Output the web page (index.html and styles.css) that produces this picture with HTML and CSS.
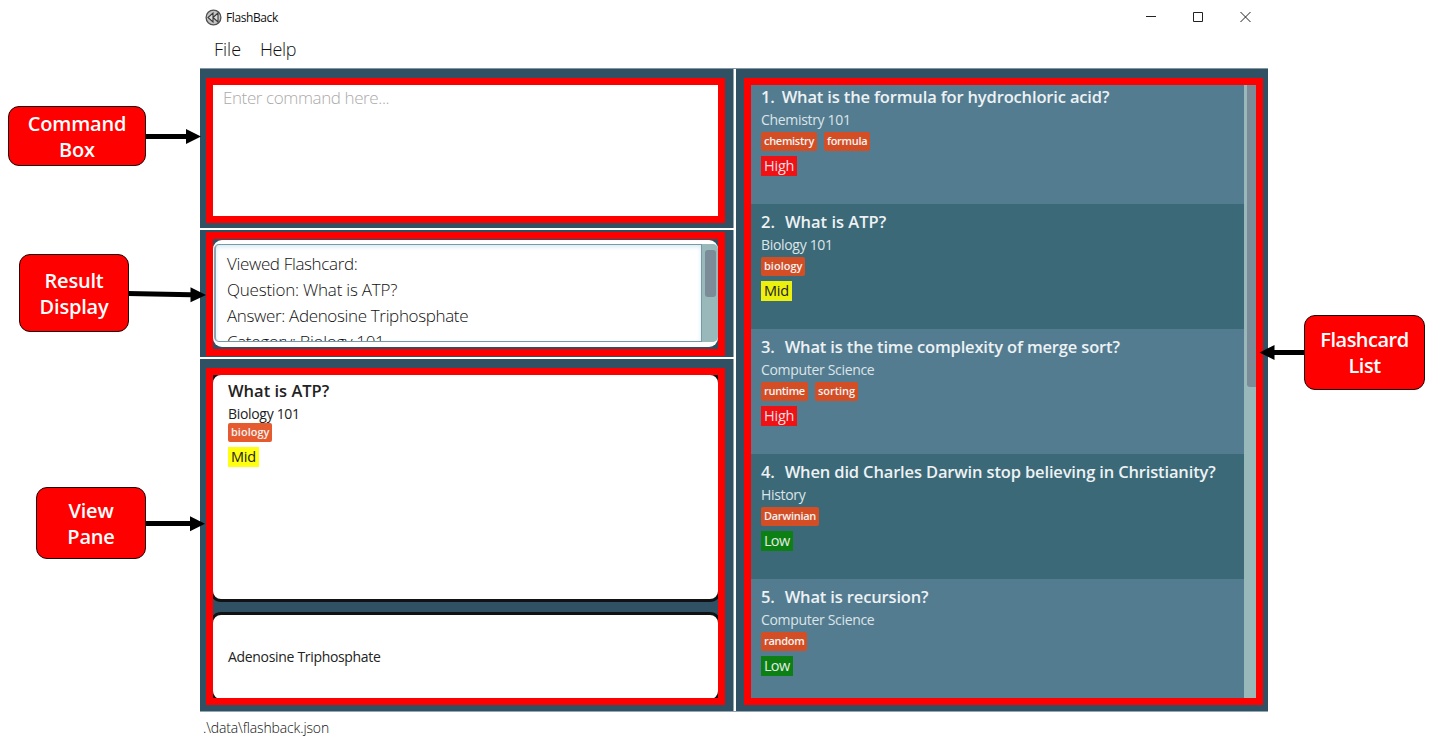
FILE: index.html
```html
<!DOCTYPE html>
<html lang="en">
<head>
<meta charset="utf-8">
<title>FlashBack</title>
<link rel="stylesheet" href="styles.css">
</head>
<body>
<div class="stage">
  <main class="window">
    <header class="titlebar">
      <svg class="logo" width="17" height="17" viewBox="0 0 17 17"><circle cx="8.5" cy="8.5" r="7.4" fill="#c4c4c4" stroke="#505050" stroke-width="1.3"/><path d="M8 4v9L3 8.5zM13 4v9L8 8.500z" fill="#ddd" stroke="#3a3a3a" stroke-width="1.1"/></svg>
      <span class="app-name">FlashBack</span>
      <svg class="controls" width="106" height="12" viewBox="0 0 106 12" fill="none" stroke="#222" stroke-width="1"><path d="M0 5.500h10"/><path d="M47.500 1.500h9v9h-9z"/><path d="M94.500 1l10 10M104.500 1l-10 10"/></svg>
    </header>
    <nav class="menu"><span class="menu-file">File</span><span class="menu-help">Help</span></nav>
    <div class="content">
      <div class="left">
        <section class="pane command"><div class="frame"><span class="prompt">Enter command here...</span></div></section>
        <section class="pane result"><div class="frame">
          <div class="result-box">
            <div class="result-text"><p>Viewed Flashcard:</p><p class="line-question">Question: What is ATP?</p><p>Answer: Adenosine Triphosphate</p><p>Category: Biology 101</p></div>
            <div class="result-bar"><div class="result-thumb"></div></div>
          </div>
        </div></section>
        <section class="pane view"><div class="frame">
          <div class="face question">
            <h2 class="title short">What is ATP?</h2><p class="category">Biology 101</p>
            <div class="tags"><span class="tag wide">biology</span></div><span class="level mid">Mid</span>
          </div>
          <div class="face answer"><p class="category">Adenosine Triphosphate</p></div>
        </div></section>
      </div>
      <section class="pane list"><div class="frame">
        <div class="cards">
          <article class="card"><h2 class="title"><span class="num first">1.</span>What is the formula for hydrochloric acid?</h2><p class="category">Chemistry 101</p><div class="tags"><span class="tag">chemistry</span><span class="tag">formula</span></div><span class="level high">High</span></article>
          <article class="card"><h2 class="title short"><span class="num">2.</span>What is ATP?</h2><p class="category">Biology 101</p><div class="tags"><span class="tag wide">biology</span></div><span class="level mid">Mid</span></article>
          <article class="card"><h2 class="title"><span class="num">3.</span>What is the time complexity of merge sort?</h2><p class="category">Computer Science</p><div class="tags"><span class="tag">runtime</span><span class="tag wide">sorting</span></div><span class="level high">High</span></article>
          <article class="card"><h2 class="title"><span class="num">4.</span>When did Charles Darwin stop believing in Christianity?</h2><p class="category">History</p><div class="tags"><span class="tag">Darwinian</span></div><span class="level low">Low</span></article>
          <article class="card"><h2 class="title"><span class="num">5.</span>What is recursion?</h2><p class="category">Computer Science</p><div class="tags"><span class="tag">random</span></div><span class="level low">Low</span></article>
        </div>
        <div class="list-bar"><div class="list-thumb"></div></div>
      </div></section>
    </div>
    <footer class="status">.\data\flashback.json</footer>
  </main>

  <svg class="arrows" width="1430" height="746" viewBox="0 0 1430 746">
    <g stroke="#000" stroke-width="5"><path d="M145 136.5H187"/><path d="M128 293.5L191 294.8"/><path d="M145 523.5H191"/><path d="M1305 352.5H1273"/></g>
    <path d="M186 129l15 7.5-15 7.5zM190.500 287.300l15.500 7.700-15.500 7.300zM190 516.300l15 7.400-15 7.600zM1274.500 345l-15 7.500 15 7.500z"/>
  </svg>
  <div class="callout callout-command"><span>Command</span><span>Box</span></div>
  <div class="callout callout-result"><span>Result</span><span>Display</span></div>
  <div class="callout callout-view"><span>View</span><span>Pane</span></div>
  <div class="callout callout-list"><span>Flashcard</span><span>List</span></div>
</div>
</body>
</html>
```
FILE: styles.css
```css
* { box-sizing: border-box; }
body, p, h2 { margin: 0; }
body { background: #fff; font-family: "Open Sans", "Noto Sans", sans-serif; overflow: hidden; }
.stage { position: relative; width: 1430px; height: 746px; }
.window { width: 1068px; height: 746px; margin-left: 200px; display: flex; flex-direction: column; white-space: nowrap; }
.titlebar { height: 33px; display: flex; align-items: center; padding: 1px 16px 0 5px; }
.logo { margin-right: 4px; }
.app-name { font-size: 12px; letter-spacing: -0.4px; color: #111; }
.controls { margin-left: auto; }
.menu { height: 35px; display: flex; padding-left: 14px; font-size: 18px; line-height: 33px; font-weight: 300; color: #111; gap: 19px; }
.menu-help { letter-spacing: -0.4px; }
.content { height: 644px; display: grid; grid-template-columns: 534px 532px; gap: 2px; background: #fff; border-top: 1px solid #8297a2; border-bottom: 1px solid #93a6b0; }
.left { display: grid; grid-template-rows: 159px 127px 352px; gap: 2px; }
.pane { background: #2f5163; display: flex; }
.left .pane { border-right: 1px solid #93a6b0; }
.frame { border: 7px solid #f00; width: 519px; }
.command { padding: 9px 0 5px 6px; }
.command .frame { background: #fff; padding-left: 10px; line-height: 26px; }
.prompt { font-size: 17px; font-weight: 300; letter-spacing: -0.4px; color: #aaa; }
.result { padding: 2px 0 1px 6px; }
.result .frame { padding: 1px 0 2px; background: #2f5163; overflow: hidden; }
.result-box { height: 107px; background: #fff; border-radius: 9px; padding: 4px 0 5px 1px; display: flex; }
.result-text { width: 488px; border: 1px solid #7899a8; border-left: 2px solid #8aa6b4; border-radius: 5px 0 0 5px; box-shadow: inset 0 2px 4px #d8eaf2; overflow: hidden; padding: 6px 0 0 11px; font-size: 17px; line-height: 26px; font-weight: 300; letter-spacing: -0.35px; color: #111; }
.line-question { letter-spacing: -0.22px; }
.result-bar { width: 16px; background: #98b8ba; border-radius: 0 5px 5px 0; padding: 6px 2px 0 3px; }
.result-thumb { height: 47px; border-radius: 3px; background: #7b8b98; }
.view { padding: 9px 0 6px 6px; }
.view .frame { display: flex; flex-direction: column; gap: 10px; overflow: hidden; background: #2f5163; }
.face { background: #fff; color: #222; border: 3px solid #101214; border-radius: 11px; margin: 0 -3px; padding-left: 15px; flex: none; }
.question { height: 230px; margin-top: -3px; padding-top: 4px; }
.answer { height: 90px; padding-top: 31px; }
.title { font-size: 16.500px; font-weight: 600; line-height: 24px; letter-spacing: -0.15px; }
.title.short { letter-spacing: 0; }
.num { display: inline-block; margin-right: 10px; }
.num.first { margin-right: 7px; }
.category { font-size: 14px; line-height: 21px; letter-spacing: -0.32px; }
.tags { display: flex; gap: 7px; margin-top: 2px; }
.face .tags { margin-top: -1px; }
.tag { height: 19px; padding: 0 3px; border-radius: 2px; background: #d34e25; color: #f3f3f3; font-size: 11px; line-height: 18px; font-weight: 600; letter-spacing: -0.3px; }
.tag.wide { letter-spacing: 0; }
.face .tag { background: #e55a2e; }
.level { display: inline-block; height: 20px; margin-top: 5px; padding: 0 3px; font-size: 14.500px; line-height: 20px; vertical-align: top; }
.high { background: #f01115; color: #f3dfe0; letter-spacing: -0.2px; }
.mid { background: #ecf00f; color: #222; letter-spacing: -0.2px; }
.face .mid { background: #ff1; }
.low { background: #0d8013; color: #e2ece6; letter-spacing: -0.7px; padding-right: 4px; }
.list { padding: 9px 0 6px 8px; }
.list .frame { display: grid; grid-template-columns: 493px 12px; overflow: hidden; }
.cards { margin-top: -6px; height: 619px; overflow: hidden; }
.card { height: 125px; padding: 6px 0 0 10px; background: #547c90; color: #dce5e9; }
.card:nth-child(even) { background: #3c6977; }
.card .title { color: #edf2f5; }
.list-bar { background: #98b8ba; padding-left: 3px; }
.list-thumb { height: 302px; background: #7b8b98; border-radius: 0 0 0 3px; }
.status { padding: 5px 0 0 3px; font-size: 14px; line-height: 21px; font-weight: 300; letter-spacing: -0.14px; color: #111; }
.arrows { position: absolute; left: 0; top: 0; }
.callout { position: absolute; display: flex; flex-direction: column; justify-content: center; align-items: center; padding-top: 1px; background: #f00; border: 1px solid #200; border-radius: 11px; color: #fff; font-size: 20px; line-height: 26px; font-weight: 600; letter-spacing: -0.2px; white-space: nowrap; }
.callout-command { left: 8px; top: 106px; width: 138px; height: 60px; }
.callout-result { left: 19px; top: 254px; width: 110px; height: 78px; }
.callout-view { left: 36px; top: 487px; width: 110px; height: 72px; }
.callout-list { left: 1304px; top: 315px; width: 121px; height: 75px; letter-spacing: -0.5px; }
```
